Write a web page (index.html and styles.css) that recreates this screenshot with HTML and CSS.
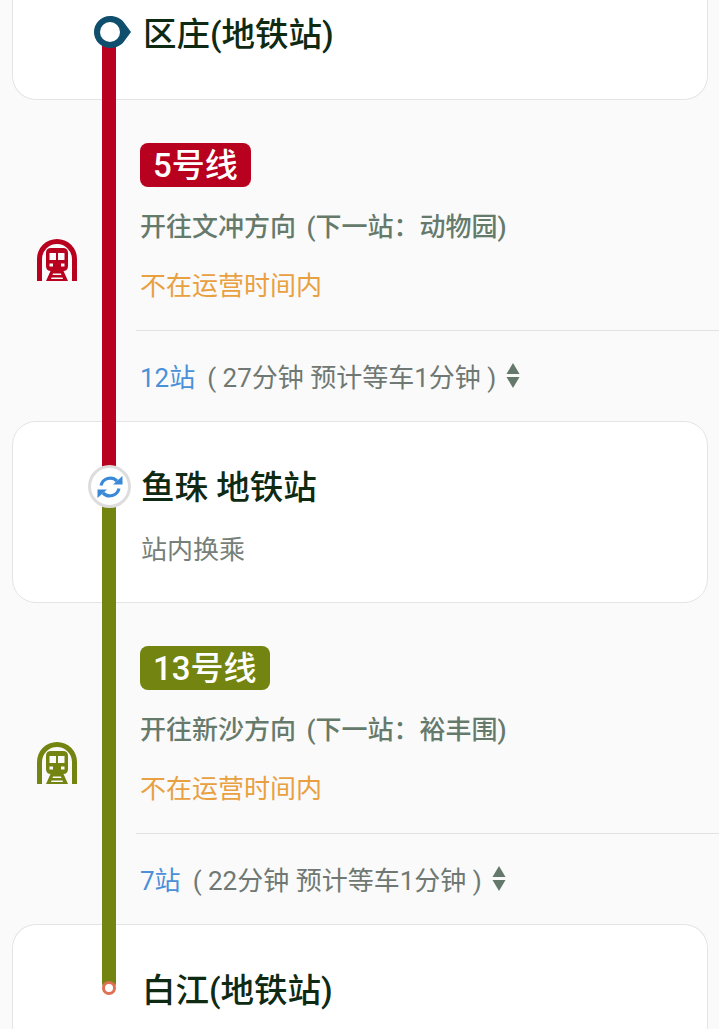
FILE: index.html
```html
<!DOCTYPE html>
<html lang="zh-CN">
<head>
  <meta charset="UTF-8">
  <meta name="viewport" content="width=device-width, initial-scale=1.0">
  <title>地铁换乘方案</title>
  <link rel="stylesheet" href="styles.css">
</head>
<body>
  <div class="route">

    <div class="station station-first">
      <svg class="pin-start" width="38" height="32" viewBox="0 0 38 32">
        <path d="M16 0 C22 0 27 2.500 30 6.500 L37 16 L30 25.500 C27 29.500 22 32 16 32 A16 16 0 0 1 16 0 Z" fill="#0f4f6d"/>
        <circle cx="16" cy="16" r="10" fill="#fff"/>
      </svg>
      <h2 class="station-name">区庄(地铁站)</h2>
    </div>

    <div class="segment">
      <div class="line line-red"></div>
      <div class="segment-icon">
        <svg width="40" height="42" viewBox="0 0 40 42" fill="#b8001f">
          <path d="M0 42 V20 A20 20 0 0 1 40 20 V42 H35 V20 A15 15 0 0 0 5 20 V42 Z"/>
          <path d="M14 9 H26 Q31 9 31 14 V27 Q31 32 26 32 H14 Q9 32 9 27 V14 Q9 9 14 9 Z M12.500 14 V21 H19 V14 Z M21 14 V21 H27.500 V14 Z M12.500 24.500 V27.500 H16 V24.500 Z M24 24.500 V27.500 H27.500 V24.500 Z" fill-rule="evenodd"/>
          <path d="M13.500 32 H26.500 L31 42 H9 Z M16 34.500 L15.500 36 H24.500 L24 34.500 Z M14.500 38.500 L14 40 H26 L25.500 38.500 Z" fill-rule="evenodd"/>
        </svg>
      </div>
      <div class="segment-body">
        <div class="segment-info">
          <span class="badge badge-red">5号线</span>
          <div class="direction">开往文冲方向 (下一站：动物园)</div>
          <div class="status">不在运营时间内</div>
        </div>
        <div class="segment-foot">
          <span class="stops">12站</span>
          <span class="duration">( 27分钟 预计等车1分钟 )</span>
          <svg class="sort" width="14" height="25" viewBox="0 0 14 25" fill="#64796b">
            <path d="M7 0 L13.500 11 H0.500 Z"/>
            <path d="M0.500 14 H13.500 L7 25 Z"/>
          </svg>
        </div>
      </div>
    </div>

    <div class="station station-mid">
      <div class="transfer">
        <svg width="28" height="28" viewBox="0 0 28 28" fill="none" stroke="#3a88d8" stroke-width="3.200">
          <path d="M5 12.500 A9.500 9.500 0 0 1 21 8"/>
          <path d="M23 15.500 A9.500 9.500 0 0 1 7 20"/>
          <path d="M17 11.500 H26.500 V3 Z" fill="#3a88d8" stroke="none"/>
          <path d="M11 16.500 H1.500 V25 Z" fill="#3a88d8" stroke="none"/>
        </svg>
      </div>
      <h2 class="station-name station-name-mid">鱼珠 地铁站</h2>
      <div class="station-note">站内换乘</div>
    </div>

    <div class="segment">
      <div class="line line-green"></div>
      <div class="segment-icon">
        <svg width="40" height="42" viewBox="0 0 40 42" fill="#738510">
          <path d="M0 42 V20 A20 20 0 0 1 40 20 V42 H35 V20 A15 15 0 0 0 5 20 V42 Z"/>
          <path d="M14 9 H26 Q31 9 31 14 V27 Q31 32 26 32 H14 Q9 32 9 27 V14 Q9 9 14 9 Z M12.500 14 V21 H19 V14 Z M21 14 V21 H27.500 V14 Z M12.500 24.500 V27.500 H16 V24.500 Z M24 24.500 V27.500 H27.500 V24.500 Z" fill-rule="evenodd"/>
          <path d="M13.500 32 H26.500 L31 42 H9 Z M16 34.500 L15.500 36 H24.500 L24 34.500 Z M14.500 38.500 L14 40 H26 L25.500 38.500 Z" fill-rule="evenodd"/>
        </svg>
      </div>
      <div class="segment-body">
        <div class="segment-info">
          <span class="badge badge-green">13号线</span>
          <div class="direction">开往新沙方向 (下一站：裕丰围)</div>
          <div class="status">不在运营时间内</div>
        </div>
        <div class="segment-foot">
          <span class="stops">7站</span>
          <span class="duration">( 22分钟 预计等车1分钟 )</span>
          <svg class="sort" width="14" height="25" viewBox="0 0 14 25" fill="#64796b">
            <path d="M7 0 L13.500 11 H0.500 Z"/>
            <path d="M0.500 14 H13.500 L7 25 Z"/>
          </svg>
        </div>
      </div>
    </div>

    <div class="station station-last">
      <div class="pin-end"></div>
      <h2 class="station-name">白江(地铁站)</h2>
    </div>

  </div>
</body>
</html>
```

FILE: styles.css
```css
html, body {
  margin: 0;
  padding: 0;
}

body {
  width: 719px;
  height: 1029px;
  overflow: hidden;
  background-color: #fafafa;
  font-family: Roboto, "Noto Sans CJK SC", sans-serif;
}

.route {
  display: flex;
  flex-direction: column;
}

/* station cards */
.station {
  position: relative;
  margin: 0 11px 0 12px;
  background: #ffffff;
  border: 1px solid #e4e4e4;
  box-sizing: border-box;
}

.station-first {
  height: 100px;
  border-top: none;
  border-radius: 0 0 24px 24px;
  padding: 13px 0 0 130px;
}

.station-mid {
  height: 182px;
  border-radius: 24px;
  padding: 44px 0 0 128px;
}

.station-last {
  height: 105px;
  border-bottom: none;
  border-radius: 24px 24px 0 0;
  padding: 44px 0 0 129px;
}

.station-name {
  margin: 0;
  font-size: 33.5px;
  line-height: 44px;
  font-weight: 500;
  color: #0f2a12;
}

.station-note {
  margin-top: 22px;
  font-size: 26px;
  line-height: 36px;
  color: #777f79;
}

/* things sitting on the line */
.pin-start {
  position: absolute;
  left: 81px;
  top: 16px;
  z-index: 2;
}

.transfer {
  position: absolute;
  left: 75px;
  top: 43px;
  z-index: 2;
  width: 43px;
  height: 43px;
  box-sizing: border-box;
  border: 3px solid #dddddd;
  border-radius: 50%;
  background: #ffffff;
  display: flex;
  align-items: center;
  justify-content: center;
}

.pin-end {
  position: absolute;
  left: 89px;
  top: 56px;
  z-index: 2;
  width: 14px;
  height: 14px;
  box-sizing: border-box;
  border: 3px solid #df6f55;
  border-radius: 50%;
  background: #fff;
}

/* line segments */
.segment {
  position: relative;
  height: 321px;
  display: flex;
}

.line {
  position: absolute;
  left: 102px;
  width: 14px;
  top: -60px;
  bottom: -52px;
  z-index: 1;
}

.line-red {
  background: #b8001f;
}

.line-green {
  background: #738510;
  top: -100px;
  bottom: -66px;
  border-radius: 0 0 7px 7px;
}

.segment-icon {
  width: 114px;
  flex: none;
  box-sizing: border-box;
  padding-bottom: 2px;
  display: flex;
  align-items: center;
  justify-content: center;
}

.segment-body {
  margin-left: 22px;
  flex: 1;
  display: flex;
  flex-direction: column;
}

.segment-info {
  height: 231px;
  box-sizing: border-box;
  padding: 43px 0 0 4px;
  border-bottom: 1px solid #e2e2e2;
}

.badge {
  display: inline-block;
  height: 44px;
  line-height: 46px;
  padding: 0 13px;
  border-radius: 8px;
  font-size: 33px;
  font-weight: 500;
  color: #ffffff;
}

.badge-red {
  background: #b8001f;
}

.badge-green {
  background: #738510;
}

.direction {
  margin-top: 18px;
  font-size: 26px;
  line-height: 44px;
  font-weight: 500;
  word-spacing: 4px;
  color: #667a6c;
}

.status {
  margin-top: 15px;
  font-size: 26px;
  line-height: 44px;
  color: #e8a040;
}

.segment-foot {
  flex: 1;
  display: flex;
  align-items: center;
  padding-left: 4px;
  padding-bottom: 1px;
  font-size: 26px;
}

.stops {
  color: #4a90d9;
}

.duration {
  margin-left: 12px;
  color: #6f7872;
}

.sort {
  margin-left: 10px;
}
```
